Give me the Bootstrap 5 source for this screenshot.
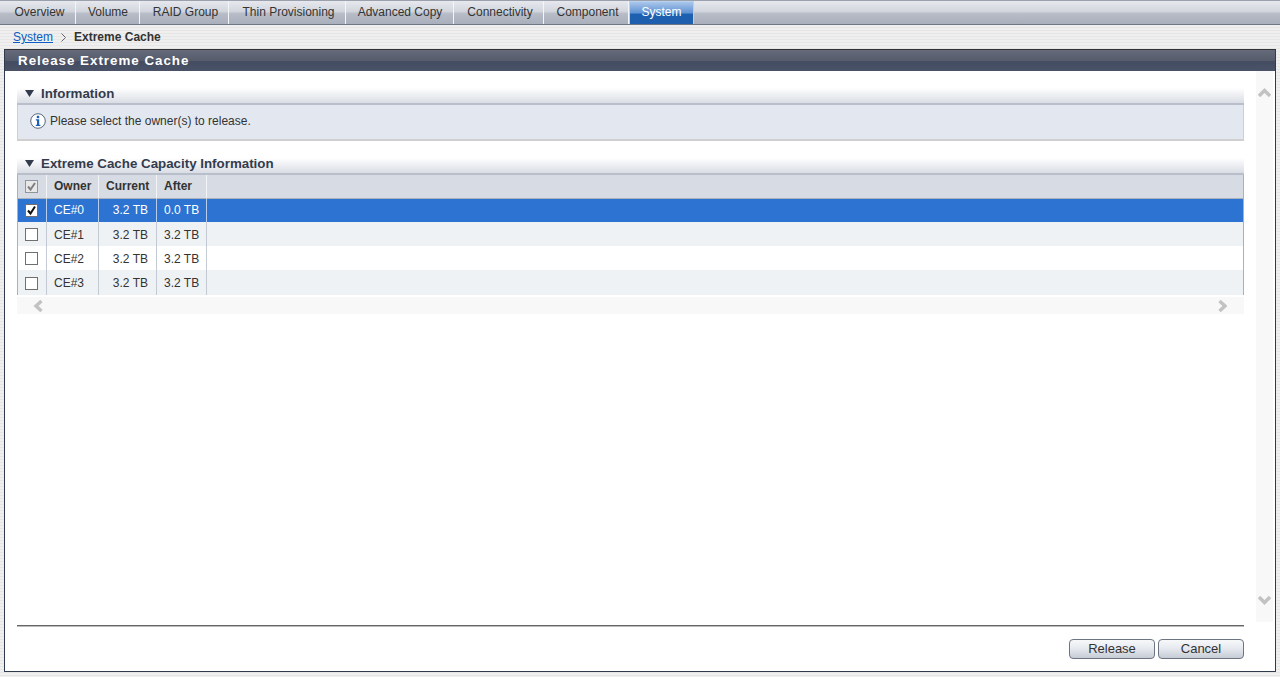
<!DOCTYPE html>
<html lang="en">
<head>
<meta charset="utf-8">
<title>Release Extreme Cache</title>
<link href="https://cdn.jsdelivr.net/npm/bootstrap@5.3.0/dist/css/bootstrap.min.css" rel="stylesheet">
<style>
html,body{height:100%;overflow:hidden}
body{font-family:"Liberation Sans",Arial,sans-serif;font-size:12px;line-height:14px;color:#333;
 background:repeating-linear-gradient(180deg,#e6e6e6 0,#e6e6e6 1px,#efefef 1px,#efefef 3px)}
.page-wrap{height:677px}
.tabbar{height:25px;padding-left:3px;border-top:1px solid #9aa0ac;border-bottom:1px solid #6f7684;flex:none;
 background:linear-gradient(180deg,#e6e8ee 0,#d3d6dd 45%,#b7bcc7 55%,#a9afbc 100%)}
.tab-item{height:23px;line-height:23px;color:#333;text-align:center;border-right:1px solid #f4f5f7;border-left:1px solid transparent;text-decoration:none;flex:none}
.tab-item.tab-shift{padding-left:2px}
.tab-item.active-tab{color:#fff;border:1px solid #b9d0ee;border-bottom:0;line-height:21px;
 background:linear-gradient(180deg,#aac6ea 0,#5f92d3 50%,#1d5fb0 55%,#1f5fae 100%)}
.crumbs{height:24px;padding-left:13px;line-height:24px;flex:none}
.crumbs a{color:#0b5cc4}
.crumbs svg{margin:0 8px 0 8px}
.crumbs b{color:#333}
.panel-box{width:1272px;height:623px;margin-left:4px;border:1px solid #2f3a4f;border-top-color:#333;background:#fff}
.panel-title{height:21px;padding-left:13px;line-height:21px;font-size:13.33px;font-weight:700;letter-spacing:1px;color:#fff;
 background:linear-gradient(180deg,#656b7a 0,#565c6c 50%,#444c62 55%,#4a5268 100%);flex:none}
.panel-body{height:551px;flex:none}
.main-col{width:1227px;margin-left:12px;padding-top:13px;flex:none}
.scroll-col{width:17px;margin-left:12px;background:#f8f8f8;flex:none;padding:17px 0 17px}
.sec-head{height:21px;padding-left:8px;font-size:13.33px;line-height:19px;font-weight:700;color:#333c4d;
 background:linear-gradient(180deg,#fff 0,#fff 20%,#d9dde4 100%);border-bottom:2px solid #b9bfca}
.sec-head svg{margin:0 7px 1px 0}
.info-box{height:36px;padding:0 0 2px 12px;background:#e3e8f0;border:1px solid #cfcfcf;border-bottom-width:2px;border-top:0;gap:4px}
.sec-gap{margin-top:13px}
.cap-grid{width:100%;border-collapse:separate;border-spacing:0;table-layout:fixed;margin:0;border-left:1px solid #a9b1bd;border-right:1px solid #a9b1bd}
.cap-grid th,.cap-grid td{padding:0 7px;height:24px;border-right:1px solid #c3cad3;vertical-align:middle;color:#333;font-weight:400;white-space:nowrap}
.cap-grid th{font-weight:700;background:#d6dbe4;border-right-color:#f2f4f7;height:24px;padding-bottom:2px;border-bottom:1px solid #a9b1bd}
.cap-grid th:last-child,.cap-grid td:last-child{border-right:0}
.cap-grid td{padding-top:2px}
.cap-grid .cell-check,.cap-grid th.cell-check{padding:0}
.cap-grid .cell-num{text-align:right;padding-right:8px}
.row-alt td{background:#eff2f5}
.cap-grid .row-sel td{height:23px;padding-top:0;background:#2c73d2;color:#fff;border-right-color:#b7cdeb}
.cap-grid .row-sel td:not(.cell-check){padding-bottom:2px}
.cap-grid .row-last td{height:25px;padding-top:1px}
.tick-box{display:block;width:13px;height:13px;margin-left:7px;background:#fff;border:1px solid #6f6f6f}
.tick-box svg{display:block}
.tick-dim{background:#e8e8e8;border-color:#8f959e}
.hscroll{height:17px;margin-top:2px;padding:0 17px 0 16px;background:#f8f8f8}
.panel-foot{height:45px;margin:3px 12px 0 12px;padding-top:13px;border-top:1px solid #666;box-shadow:inset 0 1px 0 #bbb;width:1227px;gap:3px;flex:none}
.foot-btn{width:86px;height:20px;padding:0 0 2px;font-size:13px;line-height:17px;color:#333;border:1px solid #6d7583;border-radius:4px;
 background:linear-gradient(180deg,#f7f8fa 0,#e7eaef 45%,#c6ccd6 100%)}
</style>
</head>
<body>
<div class="page-wrap d-flex flex-column">
  <nav class="tabbar d-flex">
    <a class="tab-item" style="width:73px" href="#">Overview</a>
    <a class="tab-item" style="width:64px" href="#">Volume</a>
    <a class="tab-item tab-shift" style="width:89px" href="#">RAID Group</a>
    <a class="tab-item tab-shift" style="width:117px" href="#">Thin Provisioning</a>
    <a class="tab-item" style="width:108px" href="#">Advanced Copy</a>
    <a class="tab-item tab-shift" style="width:90px" href="#">Connectivity</a>
    <a class="tab-item tab-shift" style="width:85px" href="#">Component</a>
    <a class="tab-item active-tab" style="width:65px" href="#">System</a>
  </nav>
  <div class="crumbs d-flex align-items-center">
    <a href="#">System</a>
    <svg width="5" height="9" viewBox="0 0 5 9"><path d="M.5 .5 4.5 4.5 .5 8.5" fill="none" stroke="#666"/></svg>
    <b>Extreme Cache</b>
  </div>
  <section class="panel-box d-flex flex-column">
    <div class="panel-title">Release Extreme Cache</div>
    <div class="panel-body d-flex">
      <div class="main-col">
        <div class="sec-head">
          <svg width="9" height="7" viewBox="0 0 9 7"><path d="M0 0H9L4.5 7Z" fill="#333c4d"/></svg>Information
        </div>
        <div class="info-box d-flex align-items-center">
          <svg width="16" height="16" viewBox="0 0 16 16"><circle cx="8" cy="8" r="7.3" fill="#fff" stroke="#5a6577"/><rect x="6.8" y="2.8" width="2.4" height="2.4" fill="#1c5fb8"/><path d="M5.8 6.3H9.2V11.8H10.4V13H5.8V11.8H7V7.5H5.8Z" fill="#1c5fb8"/></svg>
          <span>Please select the owner(s) to release.</span>
        </div>
        <div class="sec-head sec-gap">
          <svg width="9" height="7" viewBox="0 0 9 7"><path d="M0 0H9L4.5 7Z" fill="#333c4d"/></svg>Extreme Cache Capacity Information
        </div>
        <table class="cap-grid">
          <colgroup><col style="width:29px"><col style="width:52px"><col style="width:58px"><col style="width:50px"><col></colgroup>
          <thead><tr>
            <th class="cell-check"><span class="tick-box tick-dim"><svg width="11" height="11" viewBox="0 0 11 11"><path d="M2 5.5 4.5 8.5 9 2" fill="none" stroke="#808080" stroke-width="2"/></svg></span></th>
            <th>Owner</th><th>Current</th><th>After</th><th></th>
          </tr></thead>
          <tbody>
            <tr class="row-sel"><td class="cell-check"><span class="tick-box"><svg width="11" height="11" viewBox="0 0 11 11"><path d="M2 5.5 4.5 8.5 9 1.5" fill="none" stroke="#111" stroke-width="2"/></svg></span></td><td>CE#0</td><td class="cell-num">3.2 TB</td><td class="cell-num">0.0 TB</td><td></td></tr>
            <tr class="row-alt"><td class="cell-check"><span class="tick-box"></span></td><td>CE#1</td><td class="cell-num">3.2 TB</td><td class="cell-num">3.2 TB</td><td></td></tr>
            <tr><td class="cell-check"><span class="tick-box"></span></td><td>CE#2</td><td class="cell-num">3.2 TB</td><td class="cell-num">3.2 TB</td><td></td></tr>
            <tr class="row-alt row-last"><td class="cell-check"><span class="tick-box"></span></td><td>CE#3</td><td class="cell-num">3.2 TB</td><td class="cell-num">3.2 TB</td><td></td></tr>
          </tbody>
        </table>
        <div class="hscroll d-flex justify-content-between align-items-center">
          <svg width="10" height="12" viewBox="0 0 10 12"><path d="M8.500 1 3 6 8.500 11" fill="none" stroke="#c2c2c2" stroke-width="3.400"/></svg>
          <svg width="10" height="12" viewBox="0 0 10 12"><path d="M1.500 1 7 6 1.500 11" fill="none" stroke="#c2c2c2" stroke-width="3.400" transform="translate(1)"/></svg>
        </div>
      </div>
      <div class="scroll-col d-flex flex-column justify-content-between align-items-center">
        <svg width="13" height="9" viewBox="0 0 13 9"><path d="M1 8 6.500 2.500 12 8" fill="none" stroke="#c2c2c2" stroke-width="3.400"/></svg>
        <svg width="13" height="9" viewBox="0 0 13 9"><path d="M1 1 6.500 6.500 12 1" fill="none" stroke="#c2c2c2" stroke-width="3.400"/></svg>
      </div>
    </div>
    <div class="panel-foot d-flex justify-content-end align-items-start">
      <button type="button" class="btn foot-btn">Release</button>
      <button type="button" class="btn foot-btn">Cancel</button>
    </div>
  </section>
</div>
</body>
</html>
